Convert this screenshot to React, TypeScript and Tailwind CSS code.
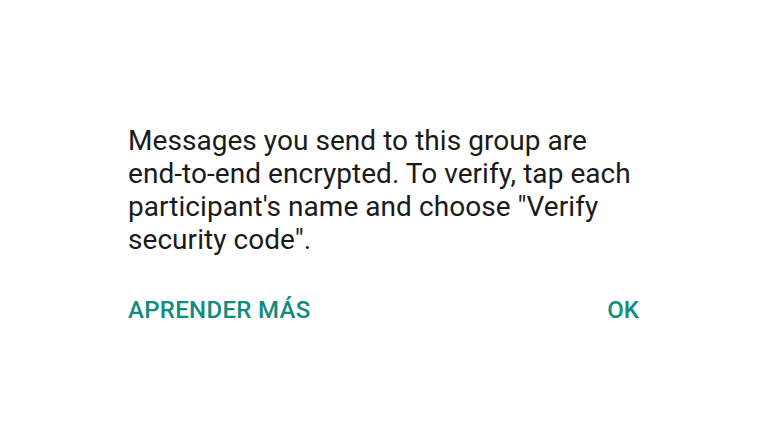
import React from 'react';

export default function App() {
  return (
    <div className="w-[782px] h-[443px] bg-white flex flex-col" style={{ fontFamily: 'Roboto, "Noto Sans", sans-serif' }}>
      <div className="ml-[128px] w-[511px] pt-[124px]">
        {/* Message */}
        <p className="text-[28px] leading-[33px] tracking-[0.05px] text-[#1a1a1a]">
          Messages you send to this group are end-to-end encrypted. To verify, tap each participant's name and choose "Verify security code".
        </p>

        {/* Actions */}
        <div className="flex items-center justify-between mt-[39px]">
          <button className="text-[24px] leading-[30px] font-medium text-[#128C7E] tracking-[0.3px]">
            APRENDER MÁS
          </button>
          <button className="text-[24px] leading-[30px] font-medium text-[#128C7E]">
            OK
          </button>
        </div>
      </div>
    </div>
  );
}
